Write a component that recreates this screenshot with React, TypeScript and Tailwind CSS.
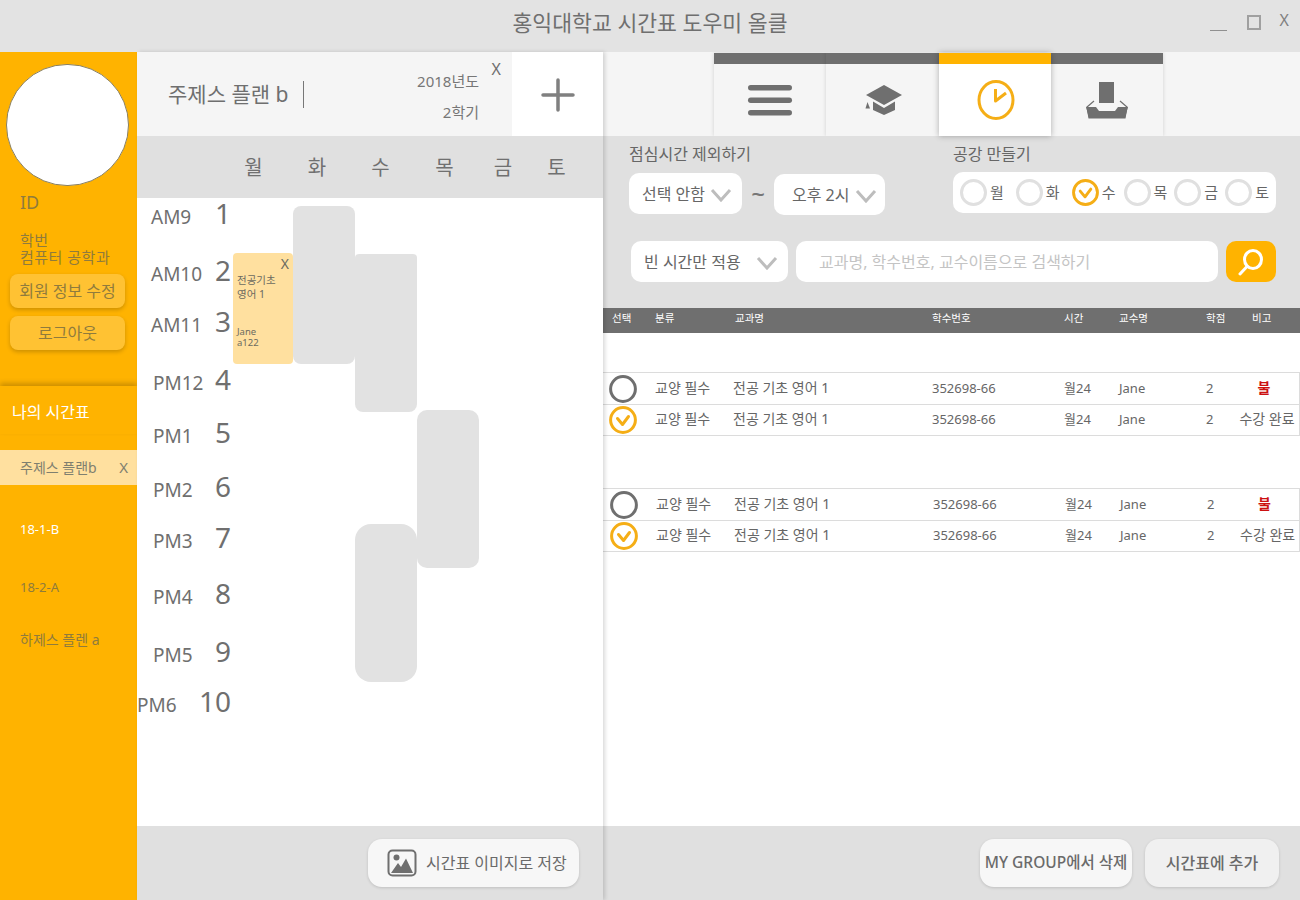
import React from 'react';

const FONT = "font-['Noto_Sans','Noto_Sans_CJK_KR',sans-serif]";

const TIMES = [
  { label: 'AM9', n: 1, h: 'h-[57px]', pl: 'pl-[14px]' },
  { label: 'AM10', n: 2, h: 'h-[51px]', pl: 'pl-[14px]' },
  { label: 'AM11', n: 3, h: 'h-[58px]', pl: 'pl-[14px]' },
  { label: 'PM12', n: 4, h: 'h-[53px]', pl: 'pl-[16px]' },
  { label: 'PM1', n: 5, h: 'h-[54px]', pl: 'pl-[16px]' },
  { label: 'PM2', n: 6, h: 'h-[51px]', pl: 'pl-[16px]' },
  { label: 'PM3', n: 7, h: 'h-[56px]', pl: 'pl-[16px]' },
  { label: 'PM4', n: 8, h: 'h-[58px]', pl: 'pl-[16px]' },
  { label: 'PM5', n: 9, h: 'h-[50px]', pl: 'pl-[16px]' },
  { label: 'PM6', n: 10, h: 'h-[50px]', pl: 'pl-0' },
];

const DAYS = [
  { d: '월', w: 'w-[63px]' },
  { d: '화', w: 'w-[64px]' },
  { d: '수', w: 'w-[63px]' },
  { d: '목', w: 'w-[65px]' },
  { d: '금', w: 'w-[52px]' },
  { d: '토', w: 'w-[55px]' },
];

const COLS = 'grid grid-cols-[52px_78px_199px_132px_55px_87px_46px_1fr] items-center';
const CELL = 'leading-[20px] -mt-[2px]';

const CheckCircle: React.FC<{ size?: number; stroke?: number }> = ({ size = 28, stroke = 3 }) => (
  <svg width={size} height={size} viewBox="0 0 28 28" className="shrink-0">
    <circle cx="14" cy="14" r="12.4" fill="#fff" stroke="#f5ae16" strokeWidth={stroke} />
    <path d="M8.5 12.5 L13.5 18.5 L19.5 10.5" fill="none" stroke="#f5ae16" strokeWidth="3" strokeLinecap="round" strokeLinejoin="round" />
  </svg>
);

const Chevron: React.FC = () => (
  <svg width="22" height="14" viewBox="0 0 22 14" className="shrink-0 mt-[2px]">
    <path d="M2 2 L11 12 L20 2" fill="none" stroke="#bdbdbd" strokeWidth="3" />
  </svg>
);

const Select: React.FC<{ label: string; className: string; textClass?: string }> = ({ label, className, textClass }) => (
  <div className={`flex items-center bg-white rounded-[10px] h-[41px] text-[16px] text-[#666] whitespace-nowrap ${className}`}>
    <span className={textClass}>{label}</span>
    <Chevron />
  </div>
);

const CourseRow: React.FC<{ checked?: boolean; shift?: boolean; note: string; last?: boolean }> = ({ checked, shift, note, last }) => (
  <div className={`${COLS} h-[32px] border-t border-r border-[#dcdcdc] text-[13px] text-[#666] ${last ? 'border-b' : ''} ${shift ? 'pl-px' : ''}`}>
    <div className="pl-[6px]">
      {checked ? (
        <CheckCircle />
      ) : (
        <svg width="28" height="28" viewBox="0 0 28 28">
          <circle cx="14" cy="14" r="12.4" fill="#fff" stroke="#6f6f6f" strokeWidth="3" />
        </svg>
      )}
    </div>
    <span className={`${CELL} text-[14px]`}>교양 필수</span>
    <span className={`${CELL} text-[14px]`}>전공 기초 영어 1</span>
    <span className={CELL}>352698-66</span>
    <span className={CELL}>월24</span>
    <span className={CELL}>Jane</span>
    <span className={CELL}>2</span>
    <span className={`${CELL} text-center whitespace-nowrap text-[14px] ${checked ? '-ml-[13px] pr-[4px]' : 'pr-[23px] text-[#cc1111] font-bold'}`}>{note}</span>
  </div>
);

const Tab: React.FC<{ active?: boolean; wide?: boolean; children: React.ReactNode }> = ({ active, wide, children }) => (
  <div className={`${wide ? 'w-[113px]' : 'w-[112px]'} h-[83px] flex flex-col ${active ? 'bg-white relative z-10 shadow-[0_0_6px_rgba(0,0,0,0.3)]' : 'bg-[#f5f5f5] shadow-[0_0_4px_rgba(0,0,0,0.15)]'}`}>
    <div className={`h-[11px] shrink-0 ${active ? 'bg-[#ffb300]' : 'bg-[#6f6f6f]'}`} />
    <div className="flex-1 flex items-center justify-center">{children}</div>
  </div>
);

const App: React.FC = () => {
  return (
    <div className={`w-[1300px] h-[900px] overflow-hidden flex flex-col bg-white ${FONT}`}>
      {/* Title bar */}
      <header className="h-[52px] shrink-0 bg-[#e3e3e3] relative flex items-center justify-center text-[21.6px] text-[#6f6f6f]">
        <span className="-mt-[5px]">홍익대학교 시간표 도우미 올클</span>
        <div className="absolute right-[11px] top-[9px] flex items-start text-[#808080]">
          <span className="block w-[17px] h-px bg-[#909090] mt-[21px] mr-[20px]" />
          <span className="block w-[14px] h-[15px] border-2 border-[#a0a0a0] mt-[6px] mr-[19px]" />
          <span className="text-[16px] leading-[22px]">X</span>
        </div>
      </header>

      <div className="flex flex-1 min-h-0">
        {/* Sidebar */}
        <aside className="w-[137px] shrink-0 bg-[#ffb300] flex flex-col text-[#8f7b3d]">
          <div className="w-[123px] h-[122px] rounded-full bg-white border border-[#8a8060] ml-[6px] mt-[12px]" />
          <div className="pl-[20px] text-[18px] leading-[24px] mt-[4px]">ID</div>
          <div className="pl-[20px] text-[15px] tracking-[0.5px] leading-[17px] mt-[18px] whitespace-nowrap">
            <div>학번</div>
            <div>컴퓨터 공학과</div>
          </div>
          <div className="flex flex-col gap-[8px] mt-[8px] ml-[10px] w-[115px]">
            <div className="h-[34px] rounded-[8px] bg-[#ffc233] shadow-[0_2px_4px_rgba(0,0,0,0.2)] flex items-center justify-center text-[16px] whitespace-nowrap">회원 정보 수정</div>
            <div className="h-[34px] rounded-[8px] bg-[#ffc233] shadow-[0_2px_4px_rgba(0,0,0,0.2)] flex items-center justify-center text-[16px]">로그아웃</div>
          </div>
          <div className="mt-[36px] h-[48px] shadow-[0_-3px_5px_rgba(0,0,0,0.2)] pl-[12px] pt-[3px] flex items-center text-[16px] text-white">나의 시간표</div>
          <div className="mt-[16px] h-[35px] bg-[#ffe09f] pl-[20px] pr-[9px] flex items-center justify-between text-[14px] text-[#7f7f6f]">
            <span>주제스 플랜b</span>
            <span className="text-[15px]">X</span>
          </div>
          <div className="pl-[20px] text-[13px] leading-[16px] mt-[36px] text-white">18-1-B</div>
          <div className="pl-[20px] text-[13px] leading-[16px] mt-[42px]">18-2-A</div>
          <div className="pl-[20px] text-[14px] leading-[18px] mt-[36px]">하제스 플렌 a</div>
        </aside>

        {/* Timetable column */}
        <section className="w-[466px] shrink-0 flex flex-col relative z-10 shadow-[2px_0_4px_rgba(0,0,0,0.15)]">
          <div className="h-[84px] shrink-0 flex bg-[#f5f5f5]">
            <div className="flex-1 flex items-center pl-[31px] relative text-[#6f6f6f]">
              <span className="text-[21px] leading-[28px]">주제스 플랜 b</span>
              <span className="w-px h-[27px] bg-[#777] ml-[15px]" />
              <div className="absolute right-[33px] top-[17px] text-right text-[15px] leading-[25px] text-[#777]">
                <div>2018년도</div>
                <div className="mt-[6px]">2학기</div>
              </div>
              <span className="absolute right-[11px] top-[5px] text-[16px]">X</span>
            </div>
            <div className="w-[91px] bg-white flex items-center justify-center pl-px pt-[2px]">
              <svg width="34" height="34" viewBox="0 0 34 34">
                <path d="M17 2 V32 M2 17 H32" stroke="#808080" strokeWidth="3.5" strokeLinecap="round" />
              </svg>
            </div>
          </div>

          <div className="h-[62px] shrink-0 bg-[#e0e0e0] flex items-center pl-[85px] pt-[2px] text-[20px] text-[#707070]">
            {DAYS.map((item) => (
              <span key={item.d} className={`${item.w} text-center`}>{item.d}</span>
            ))}
          </div>

          <div className="flex-1 bg-white relative">
            <div className="flex flex-col -mt-px">
              {TIMES.map((t) => (
                <div key={t.n} className={`${t.h} ${t.pl} w-[94px] flex items-baseline justify-between text-[#6f6f6f]`}>
                  <span className="text-[19px] leading-[32px]">{t.label}</span>
                  <span className="text-[28px] leading-[32px]">{t.n}</span>
                </div>
              ))}
            </div>

            {/* Classes on the grid */}
            <div className="absolute left-[156px] top-[8px] w-[62px] h-[158px] rounded-[8px] bg-[#e2e2e2]" />
            <div className="absolute left-[218px] top-[56px] w-[62px] h-[158px] rounded-b-[8px] rounded-t-[4px] bg-[#e2e2e2]" />
            <div className="absolute left-[280px] top-[212px] w-[62px] h-[158px] rounded-[10px] bg-[#e2e2e2]" />
            <div className="absolute left-[218px] top-[326px] w-[62px] h-[158px] rounded-[16px] bg-[#e2e2e2]" />
            <div className="absolute left-[96px] top-[55px] w-[60px] h-[111px] rounded-[4px] bg-[#ffe09f] text-[10.5px] leading-[14px] text-[#6b6b5f] pl-[4px]">
              <span className="absolute right-[4px] top-[2px] text-[14px] leading-[18px]">X</span>
              <div className="pt-[20px]">전공기초</div>
              <div>영어 1</div>
              <div className="mt-[25px] leading-[11px] text-[9.5px]">Jane</div>
              <div className="leading-[11px] text-[9.5px]">a122</div>
            </div>
          </div>

          <div className="h-[74px] shrink-0 bg-[#e0e0e0] flex items-center justify-end pr-[24px]">
            <div className="w-[211px] h-[48px] rounded-[14px] bg-[#f7f7f7] shadow-[0_1px_3px_rgba(0,0,0,0.15)] flex items-center pl-[19px] gap-[9px] text-[16px] text-[#6a6a6a] whitespace-nowrap">
              <svg width="30" height="28" viewBox="0 0 30 28" className="shrink-0">
                <rect x="1.5" y="1.5" width="27" height="25" rx="4" fill="none" stroke="#6f6f6f" strokeWidth="2" />
                <circle cx="9.5" cy="8.5" r="3" fill="#6f6f6f" />
                <path d="M4 24 L11 14 L14 18 L19 9.5 L26 24 Z" fill="#6f6f6f" />
              </svg>
              <span>시간표 이미지로 저장</span>
            </div>
          </div>
        </section>

        {/* Course search column */}
        <section className="flex-1 flex flex-col min-w-0">
          <div className="h-[84px] shrink-0 bg-[#f5f5f5] pl-[111px] pt-px flex items-start">
            <Tab>
              <svg width="46" height="34" viewBox="0 0 46 34">
                <rect x="1" y="2" width="44" height="5.5" rx="2.75" fill="#6f6f6f" />
                <rect x="1" y="14.5" width="44" height="5.5" rx="2.75" fill="#6f6f6f" />
                <rect x="1" y="27" width="44" height="5.5" rx="2.75" fill="#6f6f6f" />
              </svg>
            </Tab>
            <Tab wide>
              <svg width="38" height="32" viewBox="0 0 38 32" className="ml-[3px]">
                <path d="M19 1 L37 11 L19 21 L1 11 Z" fill="#6f6f6f" />
                <path d="M8 17.5 L19 24 L30 17.5 V26 L19 31 L8 26 Z" fill="#6f6f6f" />
                <path d="M2.5 18 L5 24.5 H0.5 Z" fill="#6f6f6f" />
              </svg>
            </Tab>
            <Tab active>
              <svg width="38" height="40" viewBox="0 0 38 40" className="ml-px">
                <ellipse cx="19" cy="20" rx="17" ry="18.5" fill="none" stroke="#f5ae16" strokeWidth="3" />
                <path d="M18.5 9 V21 L29 13" fill="none" stroke="#f5ae16" strokeWidth="3" strokeLinejoin="round" />
              </svg>
            </Tab>
            <Tab>
              <svg width="44" height="38" viewBox="0 0 44 38">
                <rect x="14" y="1" width="15" height="21" fill="#6f6f6f" />
                <path d="M9 20 L2 26 L4 37 H40 L42 26 L35 20" fill="none" stroke="#6f6f6f" strokeWidth="1.2" />
                <path d="M1 26 H11 L14 30 H30 L33 26 H43 L40 37 H4 Z" fill="#6f6f6f" />
              </svg>
            </Tab>
          </div>

          <div className="h-[172px] shrink-0 bg-[#e0e0e0] text-[#666]">
            <div className="flex pl-[26px] pt-[8px]">
              <div className="w-[324px]">
                <div className="text-[16px] leading-[20px]">점심시간 제외하기</div>
                <div className="flex items-center mt-[8px]">
                  <Select label="선택 안함" className="w-[113px] pl-[13px]" textClass="mr-[5px]" />
                  <span className="w-[32px] text-center text-[24px] leading-[24px] font-medium text-[#777]">~</span>
                  <Select label="오후 2시" className="w-[111px] pl-[18px] mt-[2px]" textClass="mr-[6px]" />
                </div>
              </div>
              <div>
                <div className="text-[16px] leading-[20px]">공강 만들기</div>
                <div className="mt-[8px] w-[323px] h-[41px] bg-white rounded-[10px] flex items-center pl-[7px] text-[15px]">
                  {['월', '화', '수', '목', '금', '토'].map((d, i) => (
                    <div key={d} className={`flex items-center gap-[3px] ${i < 2 ? 'w-[56px]' : i === 2 ? 'w-[52px]' : 'w-[51px]'}`}>
                      {i === 2 ? (
                        <CheckCircle size={27} stroke={3} />
                      ) : (
                        <span className="block w-[27px] h-[27px] rounded-full border-[3px] border-[#e0e0e0]" />
                      )}
                      <span>{d}</span>
                    </div>
                  ))}
                </div>
              </div>
            </div>
            <div className="flex items-center mt-[26px] ml-[28px] gap-[8px]">
              <Select label="빈 시간만 적용" className="w-[157px] pl-[13px]" textClass="mr-[15px]" />
              <div className="w-[422px] h-[41px] bg-white rounded-[10px] flex items-center pl-[23px] text-[16px] text-[#c4c4c4]">
                교과명, 학수번호, 교수이름으로 검색하기
              </div>
              <div className="w-[50px] h-[41px] bg-[#ffb300] rounded-[10px] flex items-center justify-center">
                <svg width="28" height="28" viewBox="0 0 28 28">
                  <ellipse cx="16" cy="11.5" rx="8.5" ry="9" fill="none" stroke="#fff" strokeWidth="3" />
                  <path d="M10 18.5 L3 26" stroke="#fff" strokeWidth="3" strokeLinecap="round" />
                </svg>
              </div>
            </div>
          </div>

          <div className="flex-1 min-h-0 bg-white">
            <div className={`${COLS} h-[25px] bg-[#6f6f6f] text-[10.5px] text-white pb-[4px]`}>
              <span className="pl-[9px]">선택</span>
              <span>분류</span>
              <span className="pl-[2px]">교과명</span>
              <span>학수번호</span>
              <span>시간</span>
              <span>교수명</span>
              <span>학점</span>
              <span>비고</span>
            </div>
            <div className="mt-[39px]">
              <CourseRow note="불" />
              <CourseRow checked note="수강 완료" last />
            </div>
            <div className="mt-[52px]">
              <CourseRow shift note="불" />
              <CourseRow shift checked note="수강 완료" last />
            </div>
          </div>

          <div className="h-[74px] shrink-0 bg-[#e0e0e0] flex items-center justify-end gap-[13px] pr-[21px] font-medium text-[#6a6a6a]">
            <div className="w-[152px] h-[48px] rounded-[14px] bg-[#f7f7f7] shadow-[0_1px_3px_rgba(0,0,0,0.15)] flex items-center justify-center whitespace-nowrap text-[15.5px]">MY GROUP에서 삭제</div>
            <div className="w-[134px] h-[48px] rounded-[14px] bg-[#f0f0f0] shadow-[0_1px_3px_rgba(0,0,0,0.15)] flex items-center justify-center text-[16px]">시간표에 추가</div>
          </div>
        </section>
      </div>
    </div>
  );
};

export default App;
